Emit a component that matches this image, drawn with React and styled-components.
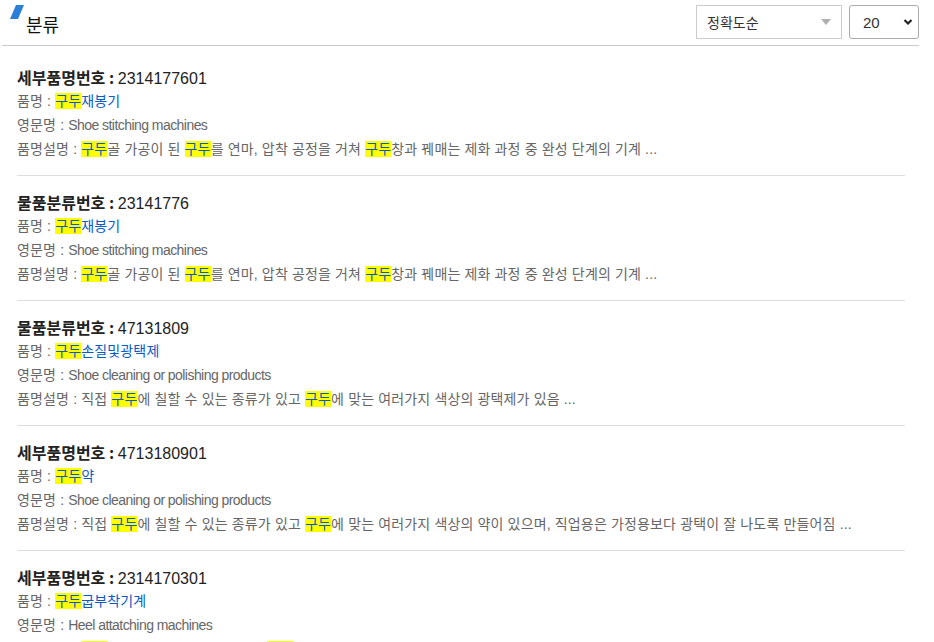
import React from "react";
import styled, { createGlobalStyle } from "styled-components";

const Global = createGlobalStyle`
  html, body { margin: 0; padding: 0; background: #fff; overflow: hidden; }
  body { font-family: "Liberation Sans", "Noto Sans CJK KR", sans-serif; }
`;

const Page = styled.div`
  width: 917px;
  margin-left: 2px;
`;

const Header = styled.div`
  display: flex;
  justify-content: space-between;
  align-items: flex-start;
  height: 45px;
  border-bottom: 1px solid #cccccc;
`;

const TitleWrap = styled.div`
  display: flex;
  align-items: flex-start;
  padding: 5px 0 0 8px;
`;

const Slash = styled.svg`
  width: 14px;
  height: 14px;
  flex: none;
`;

const Title = styled.h2`
  margin: 7px 0 0 2px;
  font-family: "Noto Sans CJK KR", sans-serif;
  font-size: 18px;
  font-weight: 400;
  line-height: 24px;
  color: #111;
`;

const Controls = styled.div`
  display: flex;
  gap: 7px;
  padding-top: 5px;
`;

const SelectBox = styled.div`
  position: relative;
  box-sizing: border-box;
  width: ${(p) => p.$w}px;
  height: 34px;
  border: 1px solid ${(p) => (p.$dark ? "#aaaaaa" : "#cccccc")};
  border-radius: ${(p) => (p.$dark ? "3px" : "0")};
  padding-left: ${(p) => p.$pl}px;
  display: flex;
  align-items: center;
  font-family: "Noto Sans CJK KR", sans-serif;
  font-size: 14px;
  color: #333;
  background: #fff;
`;

const Num = styled.span`
  font-family: "Liberation Sans", sans-serif;
  font-size: 15px;
`;

const Arrow = styled.svg`
  position: absolute;
  right: ${(p) => p.$r}px;
  top: 50%;
  transform: translateY(-50%);
`;

const List = styled.ul`
  list-style: none;
  margin: 5px 14px 0 15px;
  padding: 0;
`;

const Item = styled.li`
  padding: 14px 0;
  border-bottom: 1px solid #dcdce4;
`;

const ItemTitle = styled.div`
  height: 24px;
  overflow: hidden;
  font-family: "Noto Sans CJK KR", sans-serif;
  font-size: 16px;
  font-weight: 700;
  line-height: 24px;
  color: #222;
  & > span {
    font-family: "Liberation Sans", sans-serif;
    font-weight: 400;
  }
`;

const Row = styled.div`
  height: 24px;
  font-family: "Liberation Sans", "Noto Sans CJK KR", sans-serif;
  font-size: 14px;
  line-height: 24px;
  color: #666;
  white-space: nowrap;
  letter-spacing: 0.15px;
`;

const Latin = styled.span`
  letter-spacing: -0.55px;
`;

const Name = styled.span`
  color: #0a5bc4;
`;

const Mark = styled.mark`
  background: #ffff00;
  color: #0a5bc4;
`;

function hl(text) {
  const parts = text.split("구두");
  const out = [];
  parts.forEach((p, i) => {
    if (i > 0) out.push(<Mark key={"m" + i}>구두</Mark>);
    if (p) out.push(<React.Fragment key={"t" + i}>{p}</React.Fragment>);
  });
  return out;
}

const items = [
  {
    label: "세부품명번호",
    code: "2314177601",
    name: "구두재봉기",
    en: "Shoe stitching machines",
    desc: "구두골 가공이 된 구두를 연마, 압착 공정을 거쳐 구두창과 꿰매는 제화 과정 중 완성 단계의 기계 ...",
  },
  {
    label: "물품분류번호",
    code: "23141776",
    name: "구두재봉기",
    en: "Shoe stitching machines",
    desc: "구두골 가공이 된 구두를 연마, 압착 공정을 거쳐 구두창과 꿰매는 제화 과정 중 완성 단계의 기계 ...",
  },
  {
    label: "물품분류번호",
    code: "47131809",
    name: "구두손질및광택제",
    en: "Shoe cleaning or polishing products",
    desc: "직접 구두에 칠할 수 있는 종류가 있고 구두에 맞는 여러가지 색상의 광택제가 있음 ...",
  },
  {
    label: "세부품명번호",
    code: "4713180901",
    name: "구두약",
    en: "Shoe cleaning or polishing products",
    desc: "직접 구두에 칠할 수 있는 종류가 있고 구두에 맞는 여러가지 색상의 약이 있으며, 직업용은 가정용보다 광택이 잘 나도록 만들어짐 ...",
  },
  {
    label: "세부품명번호",
    code: "2314170301",
    name: "구두굽부착기계",
    en: "Heel attatching machines",
    desc: "구두의 굽을 부착하는 기계로서 구두 뒤축에 굽을 고정시켜 주는 제화 과정 중 마무리 단계의 기계 ...",
  },
];

export default function App() {
  return (
    <Page>
      <Global />
      <Header>
        <TitleWrap>
          <Slash viewBox="0 0 14 14">
            <polygon points="6,0 14,0 8,14 0,14" fill="#2a80d6" />
          </Slash>
          <Title>분류</Title>
        </TitleWrap>
        <Controls>
          <SelectBox $w={146} $pl={10}>
            정확도순
            <Arrow $r={10} width="10" height="6" viewBox="0 0 10 6">
              <polygon points="0,0 10,0 5,6" fill="#b0b0b0" />
            </Arrow>
          </SelectBox>
          <SelectBox $w={70} $pl={13} $dark>
            <Num>20</Num>
            <Arrow $r={5} width="10" height="7" viewBox="0 0 10 7">
              <polyline points="1.5,1.5 5,5 8.5,1.5" fill="none" stroke="#222" strokeWidth="2.2" />
            </Arrow>
          </SelectBox>
        </Controls>
      </Header>
      <List>
        {items.map((it, i) => (
          <Item key={i}>
            <ItemTitle>
              {it.label} : <span>{it.code}</span>
            </ItemTitle>
            <Row>
              품명 : <Name>{hl(it.name)}</Name>
            </Row>
            <Row>
              영문명 : <Latin>{it.en}</Latin>
            </Row>
            <Row>품명설명 : {hl(it.desc)}</Row>
          </Item>
        ))}
      </List>
    </Page>
  );
}
